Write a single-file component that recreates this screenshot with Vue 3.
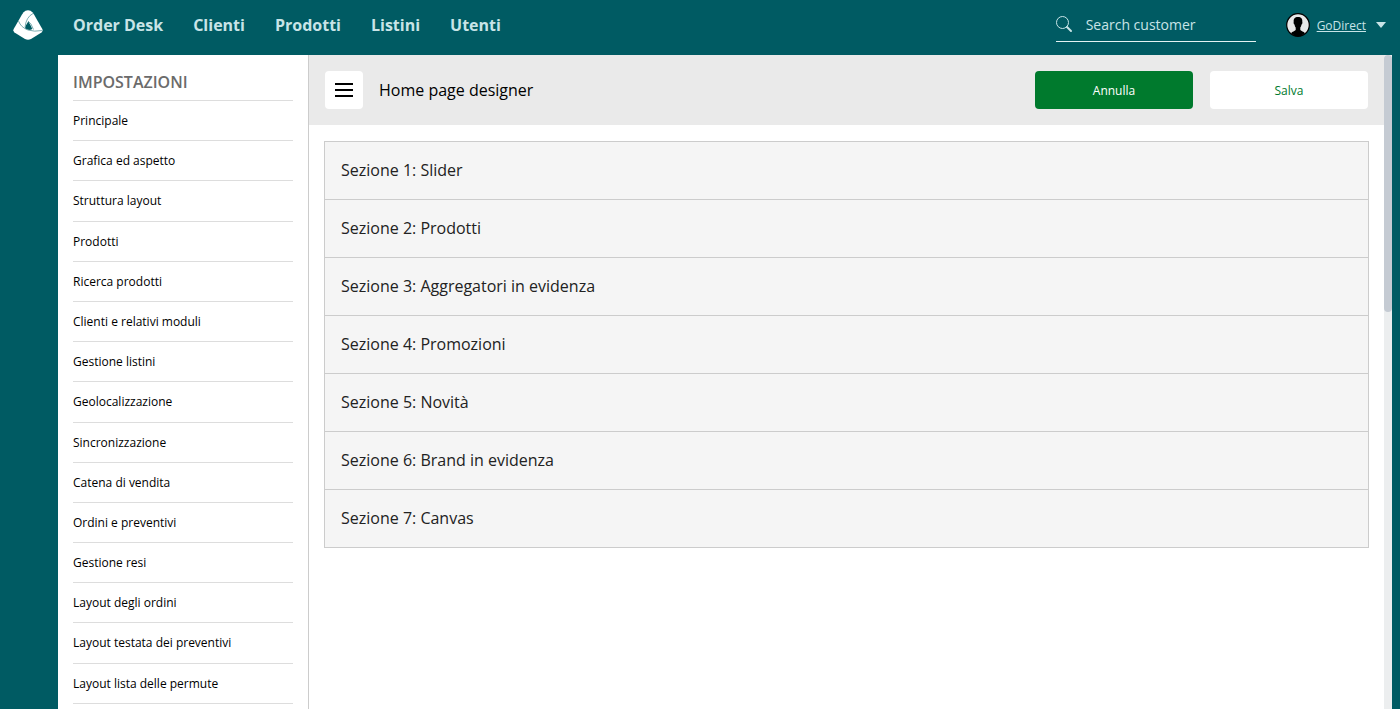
<script setup>
import { ref } from 'vue'

const nav = ['Order Desk', 'Clienti', 'Prodotti', 'Listini', 'Utenti']
const settings = [
  'Principale',
  'Grafica ed aspetto',
  'Struttura layout',
  'Prodotti',
  'Ricerca prodotti',
  'Clienti e relativi moduli',
  'Gestione listini',
  'Geolocalizzazione',
  'Sincronizzazione',
  'Catena di vendita',
  'Ordini e preventivi',
  'Gestione resi',
  'Layout degli ordini',
  'Layout testata dei preventivi',
  'Layout lista delle permute',
]
const sections = ['Slider', 'Prodotti', 'Aggregatori in evidenza', 'Promozioni', 'Novità', 'Brand in evidenza', 'Canvas']
const query = ref('')
</script>

<template>
  <div class="app">
    <header class="topbar">
      <a class="logo" href="#" aria-label="Home">
        <svg viewBox="0 0 30 30" width="30" height="30">
          <path d="M12.500 .8Q15-.4 17.500 .8Q19.500 2 21 4.500L29.300 19Q30.300 21 28.500 22.500L18 29Q15 30.600 12 29L1.500 22.500Q-.3 21 .7 19L9 4.500Q10.500 2 12.500 .8Z" fill="#fff" />
          <path d="M15.200 11.500Q17 13.500 19.300 19Q16 21 12.300 18.800C11.500 17 13.500 14.500 15.200 11.500Z" fill="#005b63" />
          <path d="M5.500 11Q8 17.500 15 20Q21 22 29.500 20.500M20 3.500Q13 7 12 17.500M20.500 19.500Q18 12.500 15 11" fill="none" stroke="#5d989d" stroke-width=".8" />
        </svg>
      </a>
      <nav class="menu">
        <a v-for="item in nav" :key="item" href="#">{{ item }}</a>
      </nav>
      <label class="search">
        <svg viewBox="0 0 18 18" width="18" height="18" fill="none" stroke="currentColor">
          <circle cx="6.500" cy="6.500" r="6" />
          <path d="M11 11L15 15" stroke-width="2" stroke-linecap="round" />
        </svg>
        <input v-model="query" type="text" placeholder="Search customer" aria-label="Search customer">
      </label>
      <div class="account">
        <svg viewBox="0 0 24 24" width="24" height="24">
          <circle cx="12" cy="12" r="11.300" fill="#e8e8e8" stroke="#000" stroke-width="1.200" />
          <path d="M12 4C8.800 4 7.400 5.500 7.700 9C7.300 10 7.900 11.200 8.500 11.600C8.800 13.200 9.200 14 9.700 14.600V17C8.500 18.300 6.500 18.300 5 20.300Q8 23.300 12 23.300T19 20.300C17.500 18.300 15.500 18.300 14.300 17V14.600C14.800 14 15.200 13.200 15.500 11.600C16.100 11.200 16.700 10 16.300 9C16.600 5.500 15.200 4 12 4Z" fill="#000" />
        </svg>
        <a href="#">GoDirect</a>
        <button class="caret" type="button" aria-label="Account">
          <svg viewBox="0 0 10 6" width="10" height="6"><path d="M0 0H10L5 6Z" fill="currentColor" /></svg>
        </button>
      </div>
    </header>

    <div class="body">
      <aside class="sidebar">
        <h2>IMPOSTAZIONI</h2>
        <ul>
          <li v-for="item in settings" :key="item"><a href="#">{{ item }}</a></li>
        </ul>
      </aside>
      <main class="content">
        <div class="toolbar">
          <button class="toggle" type="button" aria-label="Menu">
            <svg viewBox="0 0 18 14" width="18" height="14"><path d="M0 0H18V2H0ZM0 6H18V8H0ZM0 12H18V14H0Z" fill="#000" /></svg>
          </button>
          <h1>Home page designer</h1>
          <button class="action primary" type="button">Annulla</button>
          <button class="action" type="button">Salva</button>
        </div>
        <ul class="sections">
          <li v-for="(name, i) in sections" :key="name">Sezione {{ i + 1 }}: {{ name }}</li>
        </ul>
      </main>
      <div class="track"><div class="thumb"></div></div>
    </div>
  </div>
</template>

<style>
body {
  margin: 0;
  overflow: hidden;
}
</style>

<style scoped>
* {
  box-sizing: border-box;
}
.app {
  display: flex;
  flex-direction: column;
  height: 100vh;
  background: #005b63;
  font-family: "Open Sans", "Noto Sans", sans-serif;
  font-size: 16px;
  color: #000;
}
h1, h2, ul {
  margin: 0;
  padding: 0;
  font-size: 16px;
  font-weight: 400;
  list-style: none;
}
button, input {
  font: inherit;
  border: 0;
  padding: 0;
  background: none;
}
.topbar {
  display: flex;
  align-items: center;
  flex: none;
  height: 55px;
  padding: 0 14px 5px 13px;
  color: #c8e4e7;
}
.topbar svg {
  display: block;
}
.topbar a {
  color: inherit;
}
.menu {
  display: flex;
  gap: 30px;
  margin-left: 30px;
  font-weight: 700;
}
.menu a {
  text-decoration: none;
}
.search {
  display: flex;
  align-items: center;
  gap: 12px;
  width: 200px;
  height: 34px;
  margin-left: auto;
  border-bottom: 1px solid #e4f2f3;
}
.search input {
  flex: 1;
  min-width: 0;
  font-size: 14px;
  color: inherit;
  outline: none;
}
.search input::placeholder {
  color: inherit;
  opacity: 1;
}
.account {
  display: flex;
  align-items: center;
  margin-left: 30px;
  font-size: 12px;
}
.account a {
  margin: 0 10px 0 7px;
}
.caret {
  color: inherit;
}
.body {
  display: flex;
  flex: 1;
  min-height: 0;
  margin: 0 8px 0 58px;
  background: #fff;
}
.sidebar {
  flex: none;
  width: 251px;
  padding: 10px 15px 0;
  border-right: 1px solid #ccc;
  overflow: hidden;
}
.sidebar h2 {
  height: 36px;
  line-height: 34px;
  border-bottom: 1px solid #ddd;
  font-weight: 600;
  color: #6b6b6b;
}
.sidebar li {
  padding: 10px 0;
  border-bottom: 1px solid #ddd;
  font-size: 12px;
  line-height: 1.6;
}
.sidebar a {
  display: block;
  color: inherit;
  text-decoration: none;
}
.content {
  flex: 1;
  min-width: 0;
  overflow: hidden;
}
.toolbar {
  display: flex;
  align-items: center;
  height: 70px;
  padding: 0 16px;
  background: #eaeaea;
}
.toolbar h1 {
  margin: 0 auto 0 16px;
}
.toggle {
  display: grid;
  place-items: center;
  width: 38px;
  height: 38px;
  border-radius: 4px;
  background: #fff;
}
.action {
  width: 158px;
  height: 38px;
  margin-left: 17px;
  border-radius: 4px;
  background: #fff;
  font-size: 12px;
  color: #007a2d;
}
.primary {
  background: #007a2d;
  color: #fff;
}
.sections {
  margin: 16px 15px;
  border: 1px solid #ccc;
  background: #f5f5f5;
  color: #222;
}
.sections li {
  padding: 16px;
  line-height: 25px;
}
.sections li + li {
  border-top: 1px solid #ccc;
}
.track {
  flex: none;
  width: 8px;
  background: #eceeef;
}
.thumb {
  height: 39.3%;
  border-radius: 4px;
  background: #c5cbd3;
}
</style>
